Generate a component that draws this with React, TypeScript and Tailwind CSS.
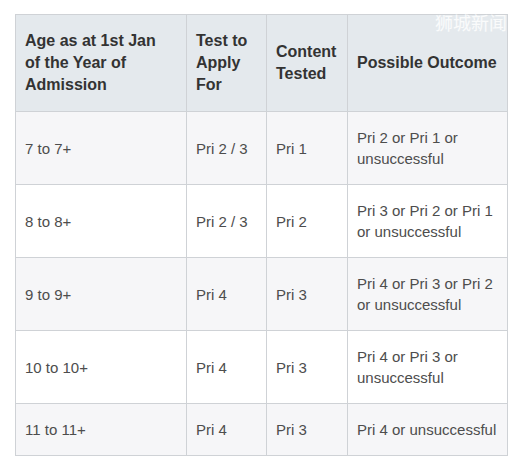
import React from 'react';

interface Row {
  age: string;
  apply: string;
  content: string;
  outcome: string;
  height: string;
}

const rows: Row[] = [
  { age: '7 to 7+', apply: 'Pri 2 / 3', content: 'Pri 1', outcome: 'Pri 2 or Pri 1 or unsuccessful', height: 'h-[73px]' },
  { age: '8 to 8+', apply: 'Pri 2 / 3', content: 'Pri 2', outcome: 'Pri 3 or Pri 2 or Pri 1 or unsuccessful', height: 'h-[73px]' },
  { age: '9 to 9+', apply: 'Pri 4', content: 'Pri 3', outcome: 'Pri 4 or Pri 3 or Pri 2 or unsuccessful', height: 'h-[73px]' },
  { age: '10 to 10+', apply: 'Pri 4', content: 'Pri 3', outcome: 'Pri 4 or Pri 3 or unsuccessful', height: 'h-[73px]' },
  { age: '11 to 11+', apply: 'Pri 4', content: 'Pri 3', outcome: 'Pri 4 or unsuccessful', height: 'h-[52px]' },
];

const th = 'border border-[#cfd2d6] px-[9px] text-left align-middle font-bold text-[16px] leading-[22px] text-[#333]';
const td = 'border border-[#cfd2d6] px-[9px] align-middle text-[15px] leading-[21px] text-[#4d4d4d]';

const App: React.FC = () => {
  return (
    <div className="relative w-[519px] h-[466px] bg-white pl-[15px] pt-[14px]" style={{ fontFamily: '"Liberation Sans", Arial, sans-serif' }}>
      <table className="w-[492px] table-fixed border-collapse">
        <colgroup>
          <col className="w-[171px]" />
          <col className="w-[80px]" />
          <col className="w-[81px]" />
          <col className="w-[160px]" />
        </colgroup>
        <thead>
          <tr className="h-[97px] bg-[#e4e9ed]">
            <th className={th}>
              <div className="max-w-[145px]">Age as at 1st Jan of the Year of Admission</div>
            </th>
            <th className={th}>Test to Apply For</th>
            <th className={th}>Content Tested</th>
            <th className={th}>Possible Outcome</th>
          </tr>
        </thead>
        <tbody>
          {rows.map((r, i) => (
            <tr key={r.age} className={`${r.height} ${i % 2 === 0 ? 'bg-[#f6f6f8]' : 'bg-white'}`}>
              <td className={td}>{r.age}</td>
              <td className={td}>{r.apply}</td>
              <td className={td}>{r.content}</td>
              <td className={td}>{r.outcome}</td>
            </tr>
          ))}
        </tbody>
      </table>

      {/* watermark */}
      <span
        className="absolute top-[12px] right-[12px] text-[18px] leading-[20px] text-white/80"
        style={{ fontFamily: '"Noto Sans CJK SC", sans-serif' }}
      >
        狮城新闻
      </span>
    </div>
  );
};

export default App;
